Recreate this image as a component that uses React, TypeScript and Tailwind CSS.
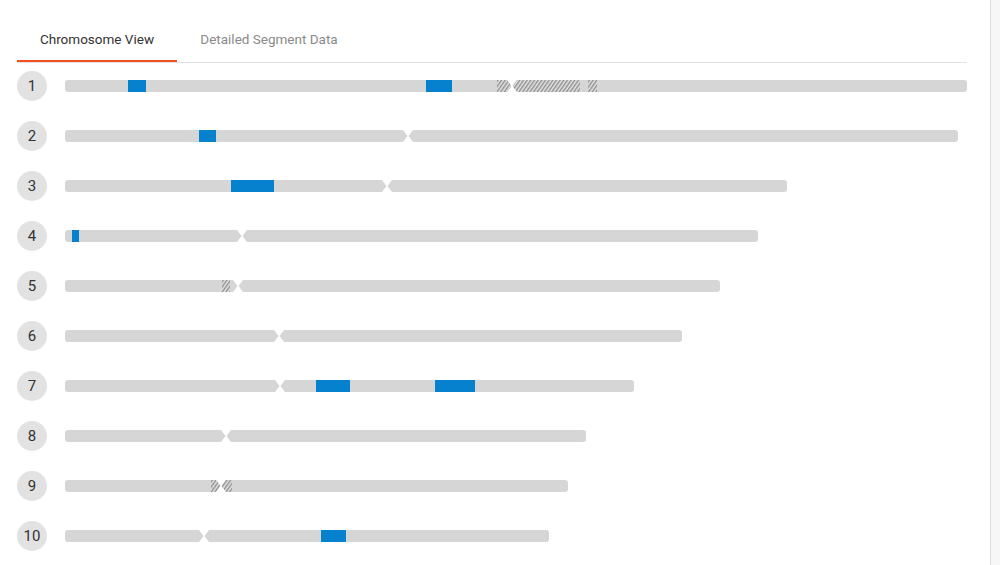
import React from "react";

type Chrom = {
    id: number;
    length: number;
    centromere: number;
    matches: [number, number][];
    gaps: [number, number][];
};

const chromosomes: Chrom[] = [
    { id: 1, length: 902, centromere: 447, matches: [[63, 81], [361, 387]], gaps: [[432, 446], [448, 515], [523, 532]] },
    { id: 2, length: 893, centromere: 343, matches: [[134, 151]], gaps: [] },
    { id: 3, length: 722, centromere: 322, matches: [[166, 209]], gaps: [] },
    { id: 4, length: 693, centromere: 177, matches: [[7, 14]], gaps: [] },
    { id: 5, length: 655, centromere: 173, matches: [], gaps: [[157, 165]] },
    { id: 6, length: 617, centromere: 214, matches: [], gaps: [] },
    { id: 7, length: 569, centromere: 215, matches: [[251, 285], [370, 410]], gaps: [] },
    { id: 8, length: 521, centromere: 161, matches: [], gaps: [] },
    { id: 9, length: 503, centromere: 156, matches: [], gaps: [[146, 155], [157, 167]] },
    { id: 10, length: 484, centromere: 139, matches: [[256, 281]], gaps: [] },
];

function ChromosomeBar({ chrom }: { chrom: Chrom }) {
    const { id, length: L, centromere: c } = chrom;
    const h = 12;
    const r = 3;
    const left = `M${r},0 H${c - 5} L${c - 0.5},6 L${c - 5},${h} H${r} Q0,${h} 0,${h - r} V${r} Q0,0 ${r},0 Z`;
    const right = `M${c + 5},0 H${L - r} Q${L},0 ${L},${r} V${h - r} Q${L},${h} ${L - r},${h} H${c + 5} L${c + 0.5},6 Z`;
    const clipId = `clip-${id}`;
    const hatchId = `hatch-${id}`;
    return (
        <svg width={L} height={h} viewBox={`0 0 ${L} ${h}`} className="block">
            <defs>
                <clipPath id={clipId}>
                    <path d={left} />
                    <path d={right} />
                </clipPath>
                <pattern id={hatchId} width="3" height="3" patternUnits="userSpaceOnUse" patternTransform="rotate(35)">
                    <rect width="3" height="3" fill="#e4e4e4" />
                    <rect width="1.4" height="3" fill="#8e8e8e" />
                </pattern>
            </defs>
            <g clipPath={`url(#${clipId})`}>
                <rect width={L} height={h} fill="#d6d6d6" />
                {chrom.gaps.map(([a, b], i) => (
                    <rect key={`g${i}`} x={a} width={b - a} height={h} fill={`url(#${hatchId})`} />
                ))}
                {chrom.matches.map(([a, b], i) => (
                    <rect key={`m${i}`} x={a} width={b - a} height={h} fill="#0681cd" />
                ))}
            </g>
        </svg>
    );
}

export default function App() {
    return (
        <div
            className="flex h-[565px] w-[1000px] overflow-hidden bg-white"
            style={{ fontFamily: "Roboto, 'Liberation Sans', sans-serif" }}
        >
            <div className="w-[990px] pl-[17px] pr-[23px] pt-[20px]">
                <div className="flex h-[43px] border-b border-[#e2e2e2]">
                    <div className="flex w-[160px] items-center justify-center border-b-2 border-[#f4511e] pb-[2px] text-[13.5px] text-[#333]">
                        Chromosome View
                    </div>
                    <div className="flex w-[184px] items-center justify-center pb-[4px] text-[13.5px] text-[#8a8a8a]">
                        Detailed Segment Data
                    </div>
                </div>
                <div className="flex flex-col gap-[20px] pt-[8px]">
                    {chromosomes.map((chrom) => (
                        <div key={chrom.id} className="flex h-[30px] items-center gap-[18px]">
                            <div className="flex h-[30px] w-[30px] items-center justify-center rounded-full bg-[#e2e2e2] text-[15px] text-[#333]">
                                {chrom.id}
                            </div>
                            <ChromosomeBar chrom={chrom} />
                        </div>
                    ))}
                </div>
            </div>
            <div className="w-[10px] border-l border-[#dcdcdc] bg-[#f7f7f7]" />
        </div>
    );
}
